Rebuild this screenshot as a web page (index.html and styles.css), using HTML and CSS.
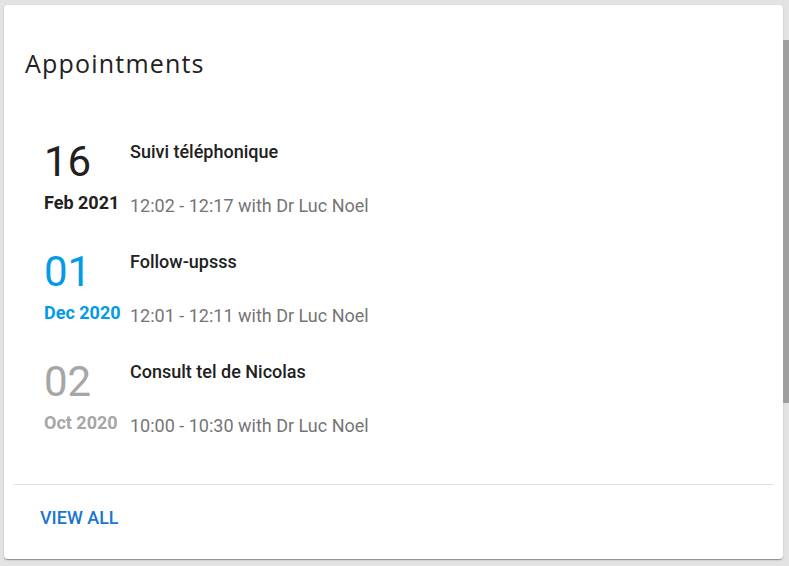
FILE: index.html
```html
<!DOCTYPE html>
<html>
<head>
<meta charset="utf-8">
<link rel="stylesheet" href="styles.css">
</head>
<body>
<div class="card">
  <div class="header"><h2 class="title">Appointments</h2></div>
  <div class="list">
    <div class="row">
      <div class="date date-dark">
        <div class="day">16</div>
        <div class="month">Feb 2021</div>
      </div>
      <div class="info">
        <div class="subject">Suivi téléphonique</div>
        <div class="time">12:02 - 12:17 with Dr Luc Noel</div>
      </div>
    </div>
    <div class="row">
      <div class="date date-blue">
        <div class="day">01</div>
        <div class="month">Dec 2020</div>
      </div>
      <div class="info">
        <div class="subject">Follow-upsss</div>
        <div class="time">12:01 - 12:11 with Dr Luc Noel</div>
      </div>
    </div>
    <div class="row">
      <div class="date date-grey">
        <div class="day">02</div>
        <div class="month">Oct 2020</div>
      </div>
      <div class="info">
        <div class="subject">Consult tel de Nicolas</div>
        <div class="time">10:00 - 10:30 with Dr Luc Noel</div>
      </div>
    </div>
  </div>
  <div class="divider"></div>
  <div class="footer"><a class="view-all" href="#">View all</a></div>
</div>
<div class="scroll-thumb"></div>
</body>
</html>
```
FILE: styles.css
```css
html, body {
  margin: 0;
  padding: 0;
  height: 100%;
  overflow: hidden;
}
body {
  background: #e3e3e3;
  font-family: Roboto, "Liberation Sans", sans-serif;
  position: relative;
}
.card {
  margin: 5px 0 0 4px;
  width: 779px;
  height: 554px;
  background: #fff;
  border-radius: 4px;
  box-shadow: 0 2px 1px -1px rgba(0,0,0,0.2), 0 1px 1px 0 rgba(0,0,0,0.14), 0 1px 3px 0 rgba(0,0,0,0.12);
  display: flex;
  flex-direction: column;
  box-sizing: border-box;
}
.header {
  padding: 42px 21px 0;
}
.title {
  margin: 0;
  font-family: "Open Sans", sans-serif;
  font-weight: 400;
  font-size: 25px;
  line-height: 32px;
  letter-spacing: 1.2px;
  color: #212121;
}
.list {
  flex: 1;
  padding: 59px 0 0 40px;
  display: flex;
  flex-direction: column;
  gap: 30px;
}
.row {
  display: flex;
  gap: 10px;
  height: 80px;
}
.date {
  width: 76px;
  flex: none;
}
.day {
  margin-top: 3px;
  font-size: 42px;
  line-height: 42px;
  font-weight: 400;
}
.month {
  margin-top: 8px;
  font-size: 18px;
  line-height: 24px;
  font-weight: 700;
  white-space: nowrap;
}
.date-dark { color: #212121; }
.date-blue { color: #039be5; }
.date-grey { color: #a6a6a6; }
.info {
  display: flex;
  flex-direction: column;
}
.subject {
  margin-top: 2px;
  font-size: 18px;
  line-height: 24px;
  font-weight: 500;
  color: #212121;
}
.time {
  margin-top: 30px;
  font-size: 18px;
  line-height: 24px;
  color: #757575;
}
.divider {
  height: 1px;
  margin: 0 10px;
  background: #e0e0e0;
}
.footer {
  padding: 20.5px 36px 29.5px;
  height: 24px;
}
.view-all {
  font-size: 18px;
  line-height: 24px;
  font-weight: 500;
  text-transform: uppercase;
  color: #1976d2;
  text-decoration: none;
  display: inline-block;
}
.scroll-thumb {
  position: absolute;
  left: 783px;
  top: 40px;
  width: 6px;
  height: 363px;
  background: #9e9e9e;
}
```
